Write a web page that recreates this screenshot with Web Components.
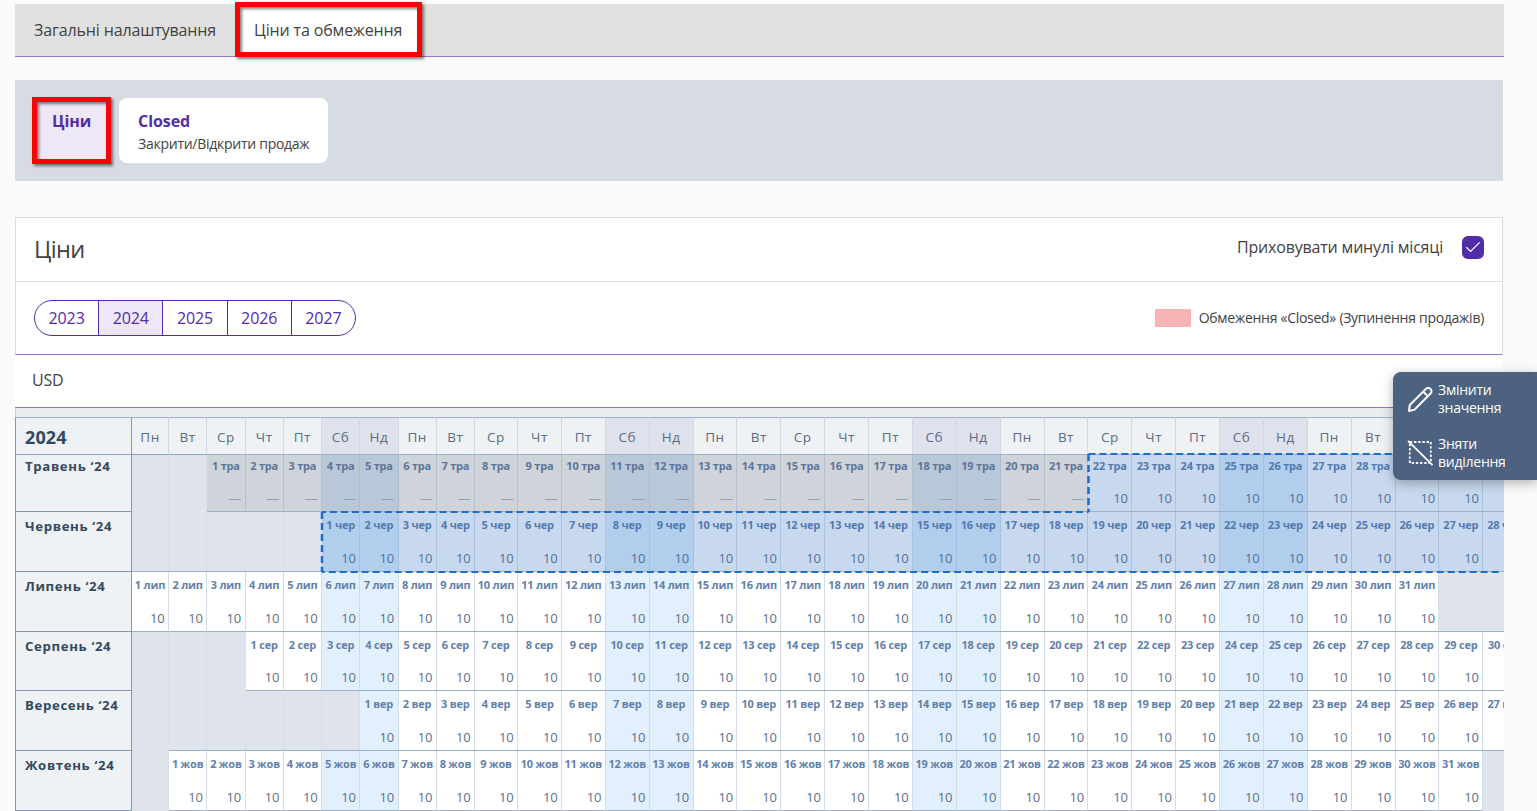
<!DOCTYPE html>
<html lang="uk">
<head>
  <meta charset="utf-8">
  <title>Ціни та обмеження</title>
  <style>
    html, body {
      margin: 0;
      height: 811px;
      overflow: hidden;
      background: #fafafa;
    }
    body {
      font-family: "Open Sans", "Noto Sans", sans-serif;
      font-size: 16px;
      color: #424242;
    }
  </style>
</head>
<body>
  <prices-page></prices-page>

  <script>
    const WEEKDAYS = ["Пн", "Вт", "Ср", "Чт", "Пт", "Сб", "Нд"];
    const COLUMNS = 33;

    // offset: weekday column of the 1st, height: row height in px
    const MONTHS = [
      { name: "Травень", short: "тра", offset: 2, days: 31, height: 57, pastUntil: 21, selectedFrom: 22 },
      { name: "Червень", short: "чер", offset: 5, days: 30, height: 60, selectedFrom: 1 },
      { name: "Липень", short: "лип", offset: 0, days: 31, height: 60 },
      { name: "Серпень", short: "сер", offset: 3, days: 31, height: 59 },
      { name: "Вересень", short: "вер", offset: 6, days: 30, height: 60 },
      { name: "Жовтень", short: "жов", offset: 1, days: 31, height: 60 }
    ];

    // Red frame round whatever is slotted
    class HighlightFrame extends HTMLElement {
      connectedCallback() {
        const shadowRoot = this.attachShadow({ mode: "open" });
        shadowRoot.innerHTML = `
          <style>
            :host {
              display: flex;
              position: relative;
            }
            .frame {
              position: absolute;
              inset: var(--frame-inset, 0);
              border: 5px solid #ff0000;
              filter: drop-shadow(2px 2px 1.5px rgba(0,0,0,0.5));
              pointer-events: none;
            }
          </style>
          <slot></slot>
          <div class="frame"></div>
        `;
      }
    }
    customElements.define("highlight-frame", HighlightFrame);

    class TabItem extends HTMLElement {
      connectedCallback() {
        const shadowRoot = this.attachShadow({ mode: "open" });
        shadowRoot.innerHTML = `
          <style>
            :host {
              display: flex;
              align-items: center;
              padding: 0 19px;
              height: 52px;
              font-size: 16px;
              letter-spacing: -0.14px;
              white-space: nowrap;
            }
            :host([active]) {
              background: #ffffff;
            }
          </style>
          <slot></slot>
        `;
      }
    }
    customElements.define("tab-item", TabItem);

    class TabBar extends HTMLElement {
      connectedCallback() {
        const shadowRoot = this.attachShadow({ mode: "open" });
        shadowRoot.innerHTML = `
          <style>
            :host {
              display: flex;
              height: 52px;
              background: #e0e0e0;
              border-bottom: 1px solid #9575cd;
            }
          </style>
          <slot></slot>
        `;
      }
    }
    customElements.define("tab-bar", TabBar);

    class RestrictionCard extends HTMLElement {
      connectedCallback() {
        const shadowRoot = this.attachShadow({ mode: "open" });
        shadowRoot.innerHTML = `
          <style>
            :host {
              display: block;
              box-sizing: border-box;
              height: 65px;
              padding: 12px 19px 0;
              border-radius: 8px;
              background: #ffffff;
              white-space: nowrap;
            }
            :host([active]) {
              background: #ede7f6;
            }
            .title {
              font-size: 16px;
              line-height: 22px;
              font-weight: 700;
              letter-spacing: -0.1px;
              color: #512da8;
            }
            .text {
              font-size: 14px;
              line-height: 24px;
              letter-spacing: -0.27px;
            }
          </style>
          <div class="title"><slot name="title"></slot></div>
          <div class="text"><slot></slot></div>
        `;
      }
    }
    customElements.define("restriction-card", RestrictionCard);

    class YearSwitch extends HTMLElement {
      connectedCallback() {
        const current = this.getAttribute("current");
        const years = this.getAttribute("years").split(",");
        const shadowRoot = this.attachShadow({ mode: "open" });
        shadowRoot.innerHTML = `
          <style>
            :host {
              display: flex;
              box-sizing: border-box;
              width: 322px;
              height: 36px;
              border: 1px solid #512da8;
              border-radius: 18px;
              overflow: hidden;
            }
            span {
              flex: 1;
              display: flex;
              align-items: center;
              justify-content: center;
              letter-spacing: -0.1px;
              color: #512da8;
            }
            span + span {
              border-left: 1px solid #512da8;
            }
            .current {
              background: #ede7f6;
            }
          </style>
          ${years.map(y => `<span class="${y === current ? "current" : ""}">${y}</span>`).join("")}
        `;
      }
    }
    customElements.define("year-switch", YearSwitch);

    class CheckBox extends HTMLElement {
      connectedCallback() {
        const shadowRoot = this.attachShadow({ mode: "open" });
        shadowRoot.innerHTML = `
          <style>
            :host {
              display: flex;
              align-items: center;
              gap: 19px;
              letter-spacing: -0.18px;
            }
            .text {
              padding-bottom: 2px;
            }
            .box {
              display: flex;
              width: 22px;
              height: 23px;
              border-radius: 6px;
              background: #512da8;
            }
          </style>
          <div class="text"><slot></slot></div>
          <div class="box">
            <svg width="22" height="23" viewBox="0 0 22 23" fill="none" stroke="#fff" stroke-width="1.3">
              <path d="M4.3 11.2 L8.6 15.4 L17.6 6.4"/>
            </svg>
          </div>
        `;
      }
    }
    customElements.define("check-box", CheckBox);

    class PricePanel extends HTMLElement {
      connectedCallback() {
        const shadowRoot = this.attachShadow({ mode: "open" });
        shadowRoot.innerHTML = `
          <style>
            :host {
              display: block;
              width: 1488px;
              background: #ffffff;
            }
            .head, .filters {
              display: flex;
              box-sizing: border-box;
              align-items: center;
              justify-content: space-between;
              padding: 0 18px;
              border: 1px solid #dadce0;
            }
            .head {
              height: 65px;
              padding-bottom: 4px;
            }
            h2 {
              margin: 2px 0 0;
              font-size: 23.5px;
              line-height: 32px;
              font-weight: 400;
              letter-spacing: -0.6px;
            }
            .filters {
              height: 73px;
              border-top: 0;
              border-bottom: 1px solid #9575cd;
            }
            .legend {
              display: flex;
              align-items: center;
              gap: 8px;
              font-size: 14px;
              letter-spacing: -0.28px;
            }
            .legend span {
              padding-bottom: 2px;
            }
            .swatch {
              width: 36px;
              height: 18px;
              background: #f8b4b4;
            }
            .currency {
              display: flex;
              align-items: center;
              box-sizing: border-box;
              height: 53px;
              padding: 0 0 2px 17px;
              letter-spacing: -0.2px;
              border-bottom: 1px solid #9575cd;
            }
          </style>
          <div class="head">
            <h2>Ціни</h2>
            <check-box>Приховувати минулі місяці</check-box>
          </div>
          <div class="filters">
            <year-switch years="2023,2024,2025,2026,2027" current="2024"></year-switch>
            <div class="legend"><div class="swatch"></div><span>Обмеження «Closed» (Зупинення продажів)</span></div>
          </div>
          <div class="currency">USD</div>
        `;
      }
    }
    customElements.define("price-panel", PricePanel);

    class DayCell extends HTMLElement {
      connectedCallback() {
        const shadowRoot = this.attachShadow({ mode: "open" });
        shadowRoot.innerHTML = `
          <style>
            :host {
              display: flex;
              flex-direction: column;
              justify-content: space-between;
              box-sizing: border-box;
              min-width: 0;
              padding: 5px 0 3px;
              background: #ffffff;
              border-right: 1px solid #d3dbe8;
              border-bottom: 1px solid #9db0cb;
              box-shadow: 0 -1px 0 #9db0cb;
              white-space: nowrap;
            }
            :host([weekend]) { background: #e2f0fd; border-right-color: #cddceb; }
            :host([past]) { background: #cfd3da; border-right-color: #b5c0cf; }
            :host([past][weekend]) { background: #b8c8d8; border-right-color: #aabccf; }
            :host([selected]) { background: #c8d9ef; border-right-color: #a9c2de; }
            :host([selected][weekend]) { background: #b1ceed; border-right-color: #a2c1e2; }
            .date {
              font-size: 11px;
              line-height: 16px;
              font-weight: 700;
              letter-spacing: -0.2px;
              text-align: center;
              color: #6280ab;
            }
            .price {
              padding-right: 3.5px;
              font-size: 13px;
              line-height: 20px;
              letter-spacing: -0.2px;
              text-align: right;
              color: #5a6f8d;
            }
            :host([selected]) .date { color: #5279b1; }
            :host([selected]) .price { color: #4f719f; }
            :host([past]) .date { color: #5c7599; }
            :host([past]) .price { color: #93a1b5; }
          </style>
          <div class="date"><slot name="date"></slot></div>
          <div class="price"><slot></slot></div>
        `;
      }
    }
    customElements.define("day-cell", DayCell);

    class MonthRow extends HTMLElement {
      set month(month) {
        const shadowRoot = this.attachShadow({ mode: "open" });
        shadowRoot.innerHTML = `
          <style>
            :host {
              display: grid;
              grid-template-columns: var(--columns);
              grid-template-rows: 100%;
            }
            .name {
              box-sizing: border-box;
              padding: 4.5px 0 0 9px;
              border: solid #8298b8;
              border-width: 0 1px 1px;
              background: #eef2f5;
              font-size: 13.2px;
              line-height: 18px;
              font-weight: 700;
              letter-spacing: 0.65px;
              color: #34495f;
              white-space: nowrap;
            }
            .blank {
              background: #dfe3ec;
              border-right: 1px solid #d9dfe9;
            }
          </style>
          <div class="name">${month.name} ‘24</div>
          ${this.cells(month)}
        `;
        this.style.height = month.height + "px";
        // the first row is shorter, its texts sit closer to the top
        if (month.height < 59) {
          shadowRoot.querySelector(".name").style.paddingTop = "2px";
          shadowRoot.querySelectorAll("day-cell").forEach(el => el.style.paddingTop = "3px");
        }
      }

      cells(month) {
        let html = "";
        for (let i = 0; i < COLUMNS; i++) {
          const day = i - month.offset + 1;
          if (day < 1 || day > month.days) {
            html += `<div class="blank"></div>`;
            continue;
          }
          const past = day <= (month.pastUntil || 0);
          const flags = [];
          if (i % 7 > 4) flags.push("weekend");
          if (past) flags.push("past");
          if (day >= (month.selectedFrom || 99)) flags.push("selected");
          html += `<day-cell ${flags.join(" ")}><span slot="date">${day} ${month.short}</span>${past ? "—" : "10"}</day-cell>`;
        }
        return html;
      }
    }
    customElements.define("month-row", MonthRow);

    class PriceCalendar extends HTMLElement {
      connectedCallback() {
        const shadowRoot = this.attachShadow({ mode: "open" });
        let heads = "";
        for (let i = 0; i < COLUMNS; i++) {
          heads += `<div class="${i % 7 > 4 ? "day weekend" : "day"}">${WEEKDAYS[i % 7]}</div>`;
        }
        shadowRoot.innerHTML = `
          <style>
            :host {
              --columns: 117px 37px repeat(8, 38.25px) 43px repeat(23, 43.88px);
              display: block;
              position: relative;
              width: 1489px;
              overflow: hidden;
            }
            .strip {
              height: 9px;
              background: #e9edf0;
              border-left: 1px solid #c7d0dc;
              box-sizing: border-box;
            }
            .head {
              display: grid;
              grid-template-columns: var(--columns);
              grid-template-rows: 100%;
              height: 38px;
            }
            .year, .day {
              display: flex;
              align-items: center;
              box-sizing: border-box;
              border-top: 1px solid #9fb2c8;
              border-bottom: 1px solid #8fa4bf;
              background: #eef2f5;
            }
            .year {
              padding: 2px 0 0 9px;
              border-left: 1px solid #8298b8;
              border-right: 1px solid #8298b8;
              font-size: 18px;
              font-weight: 700;
              letter-spacing: 0.1px;
              color: #34495f;
            }
            .day {
              justify-content: center;
              padding-top: 1px;
              border-right: 1px solid #d0d9e5;
              font-size: 13.5px;
              letter-spacing: 0.5px;
              color: #5c6c84;
            }
            .weekend {
              background: #dfe2ec;
            }
            .selection {
              position: absolute;
              left: 0;
              top: 0;
            }
          </style>
          <div class="strip"></div>
          <div class="head"><div class="year">2024</div>${heads}</div>
          <div class="months"></div>
          <svg class="selection" width="1489" height="180" fill="none" stroke="#1f6dc6" stroke-width="2" stroke-dasharray="7 3.97">
            <path d="M1073.5 46 H1489"/>
            <path d="M1073.5 46 V104" stroke-width="2.5"/>
            <path d="M307 104 H1073.5" stroke-dashoffset="3"/>
            <path d="M307 104 V164" stroke-width="2.5"/>
            <path d="M307 164 H1486" stroke-dashoffset="4.2"/>
          </svg>
        `;
        const months = shadowRoot.querySelector(".months");
        MONTHS.forEach(month => {
          const row = document.createElement("month-row");
          row.month = month;
          months.appendChild(row);
        });
      }
    }
    customElements.define("price-calendar", PriceCalendar);

    class ActionButton extends HTMLElement {
      connectedCallback() {
        const shadowRoot = this.attachShadow({ mode: "open" });
        shadowRoot.innerHTML = `
          <style>
            :host {
              display: flex;
              align-items: center;
              gap: 4px;
              height: 54px;
              padding-left: 14px;
              font-size: 14px;
              line-height: 18px;
              letter-spacing: -0.25px;
              color: #ffffff;
            }
            .label { width: 90px; }
          </style>
          <slot name="icon"></slot>
          <div class="label"><slot></slot></div>
        `;
      }
    }
    customElements.define("action-button", ActionButton);

    class FloatingActions extends HTMLElement {
      connectedCallback() {
        const shadowRoot = this.attachShadow({ mode: "open" });
        shadowRoot.innerHTML = `
          <style>
            :host {
              display: block;
              position: absolute;
              left: 1393px;
              top: 372px;
              width: 144px;
              height: 108px;
              border-radius: 8px 0 0 8px;
              background: #4d6180;
              box-shadow: 0 3px 12px rgba(0,0,0,0.3);
            }
          </style>
          <action-button>
            <svg slot="icon" width="27" height="27" viewBox="0 0 27 27" fill="none" stroke="#fff" stroke-width="2" stroke-linejoin="round">
              <path d="M2 25 L2.8 19 L18.9 2.9 a3.2 3.2 0 0 1 4.6 0 a3.2 3.2 0 0 1 0 4.6 L7.6 23.6 Z"/>
              <path d="M16.2 5.6 L20.8 10.2"/>
            </svg>
            Змінити<br>значення
          </action-button>
          <action-button>
            <svg slot="icon" width="27" height="27" viewBox="0 0 27 27" fill="none" stroke="#fff" stroke-width="1.8">
              <rect x="2.8" y="2" width="21" height="21" stroke-dasharray="2.4 1.8"/>
              <path d="M1 0.8 L25.5 25.2"/>
            </svg>
            Зняти<br>виділення
          </action-button>
        `;
      }
    }
    customElements.define("floating-actions", FloatingActions);

    class PricesPage extends HTMLElement {
      connectedCallback() {
        const shadowRoot = this.attachShadow({ mode: "open" });
        shadowRoot.innerHTML = `
          <style>
            :host {
              display: block;
              box-sizing: border-box;
              width: 1504px;
              padding: 4px 0 0 15px;
            }
            .tab-frame {
              --frame-inset: -2px -1px -1px 0;
            }
            .cards {
              display: flex;
              align-items: flex-start;
              gap: 9px;
              box-sizing: border-box;
              width: 1488px;
              height: 101px;
              margin: 23px 0 36px;
              padding: 18px;
              background: #d7dbe3;
            }
            .card-frame {
              --frame-inset: -1px -1px -1px -1px;
            }
          </style>
          <tab-bar>
            <tab-item>Загальні налаштування</tab-item>
            <highlight-frame class="tab-frame">
              <tab-item active>Ціни та обмеження</tab-item>
            </highlight-frame>
          </tab-bar>
          <div class="cards">
            <highlight-frame class="card-frame">
              <restriction-card active><span slot="title">Ціни</span></restriction-card>
            </highlight-frame>
            <restriction-card><span slot="title">Closed</span>Закрити/Відкрити продаж</restriction-card>
          </div>
          <price-panel></price-panel>
          <price-calendar></price-calendar>
          <floating-actions></floating-actions>
        `;
      }
    }
    customElements.define("prices-page", PricesPage);
  </script>
</body>
</html>
